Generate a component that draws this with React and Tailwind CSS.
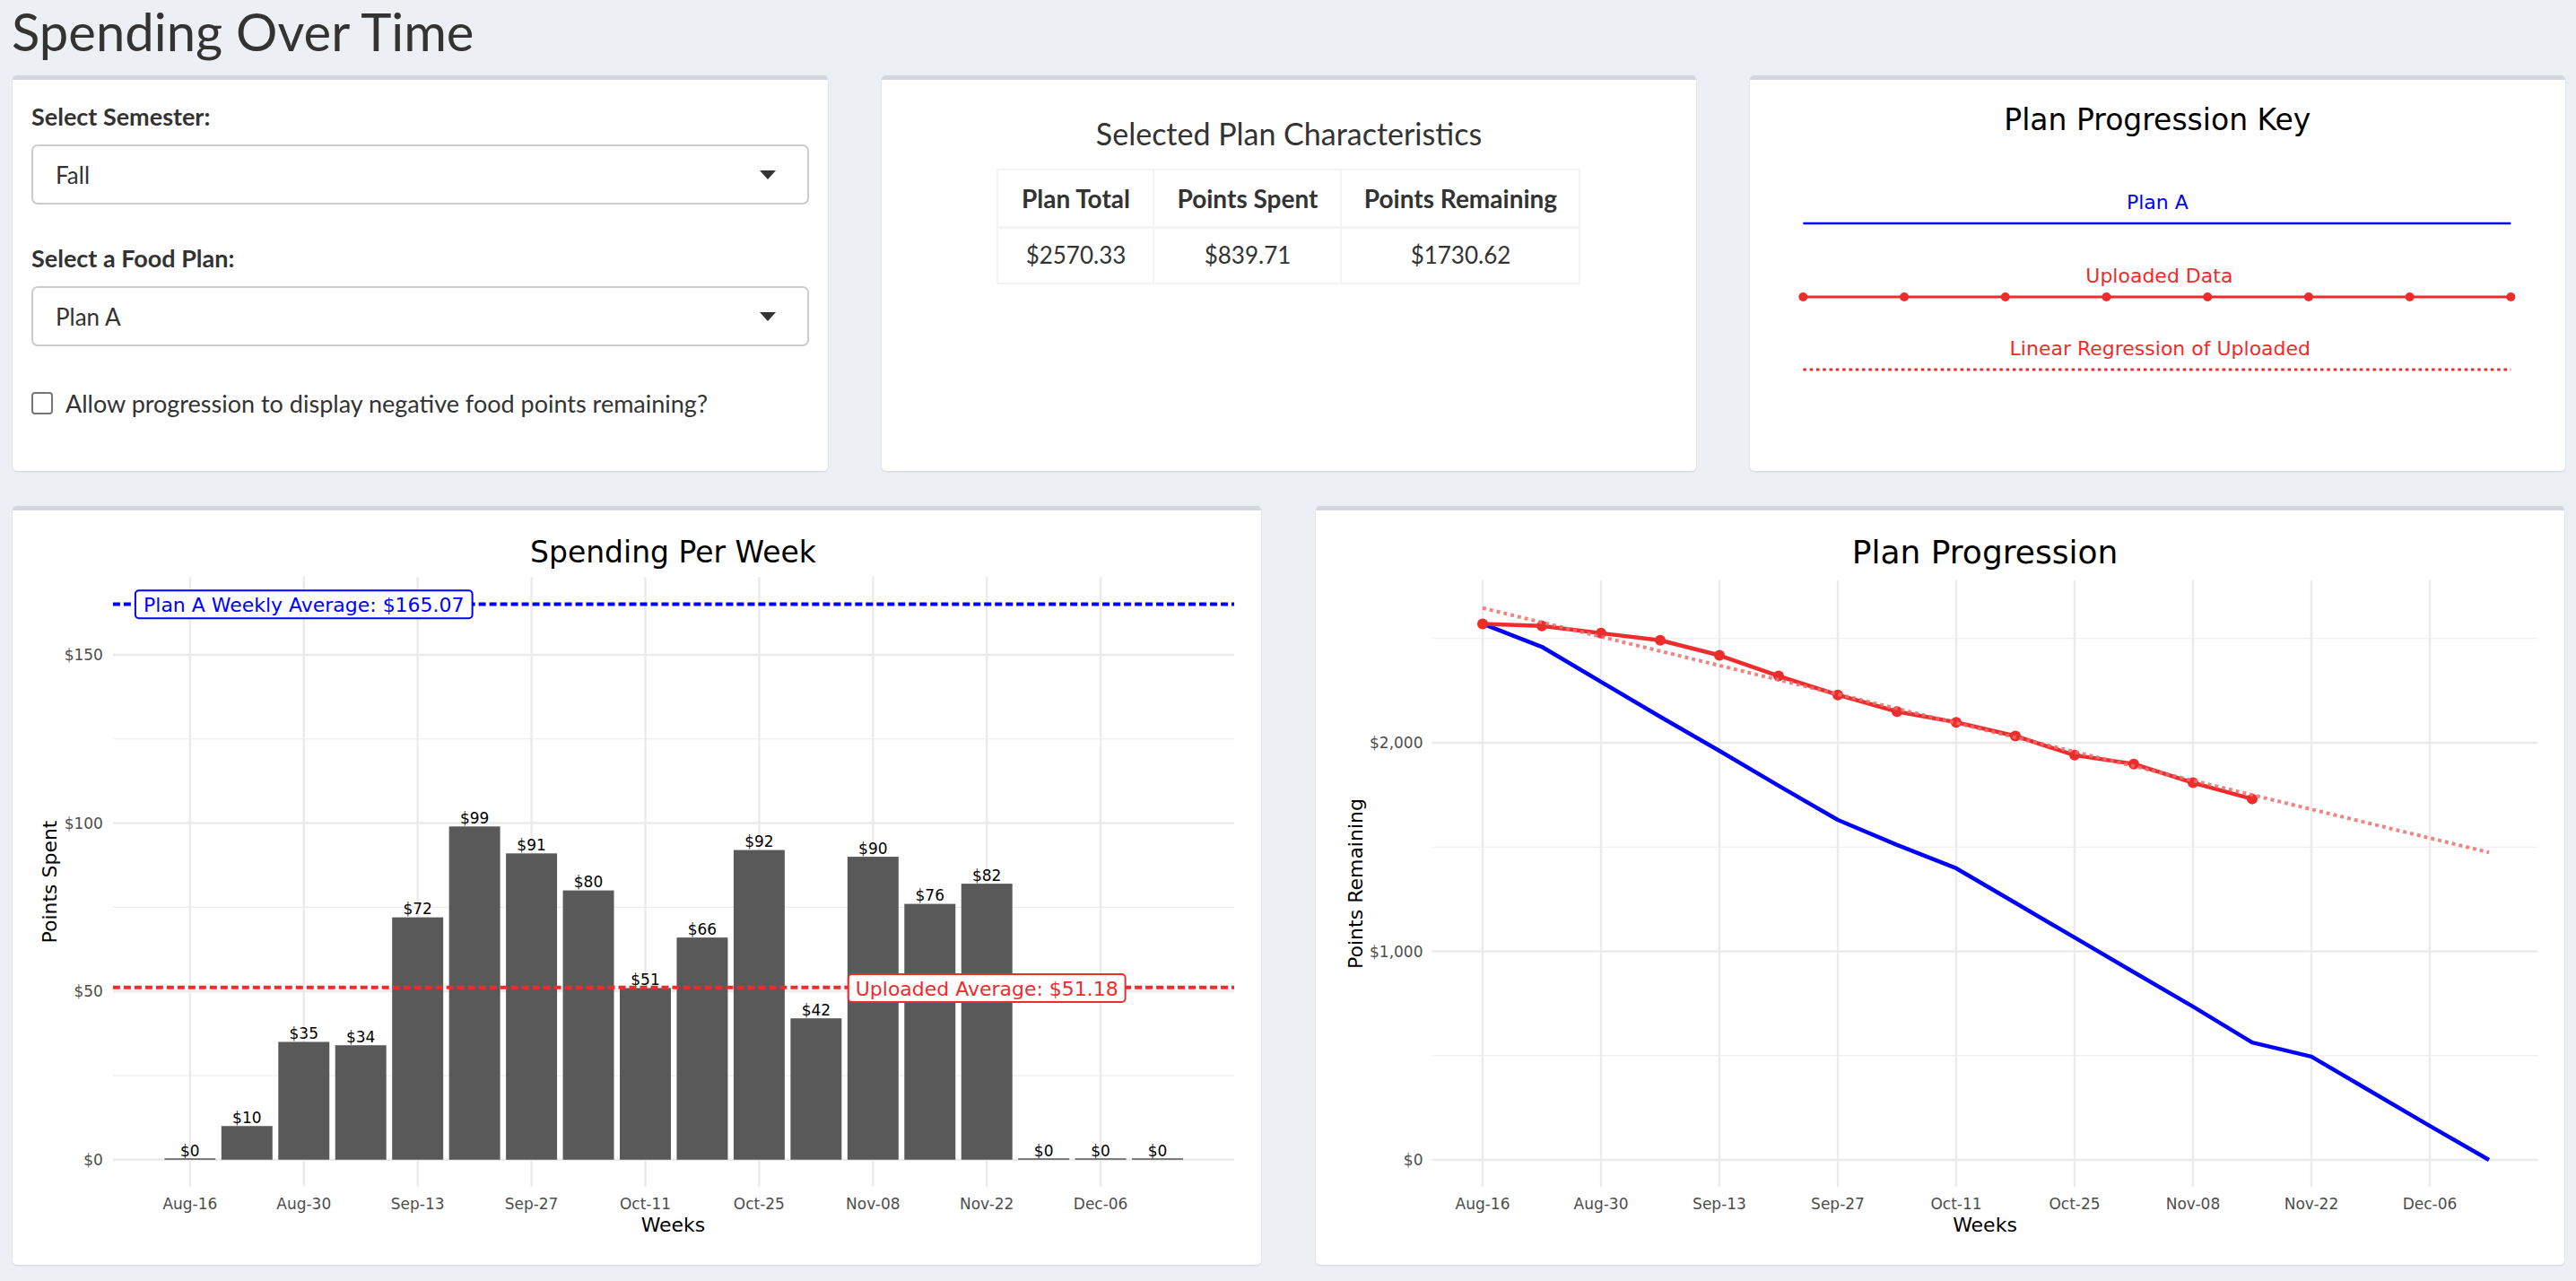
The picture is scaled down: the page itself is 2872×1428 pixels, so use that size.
import React from 'react';

// plot colours (ggplot output)
const RED = '#ee2c2c';
const BLUE = '#0000ff';
const GRID = '#ebebeb';
const AXIS = '#4d4d4d';
const PLOT_FONT = 'DejaVu Sans, sans-serif';

const weekly = [0, 10, 35, 34, 72, 99, 91, 80, 51, 66, 92, 42, 90, 76, 82, 0, 0, 0];
const ticks = ['Aug-16', 'Aug-30', 'Sep-13', 'Sep-27', 'Oct-11', 'Oct-25', 'Nov-08', 'Nov-22', 'Dec-06'];
const planA = [2570.33, 2460, 2292, 2125, 1961, 1794, 1630, 1510, 1398, 1232, 1066, 900, 735, 563, 495, 329, 163, 0];

// cumulative uploaded data, 14 weeks
const uploaded = weekly.slice(0, 14).reduce((acc, w, i) => {
    const prev = i === 0 ? 2570.33 : acc[i - 1];
    acc.push(prev - w);
    return acc;
}, []);
uploaded[13] = 1730.62;

// linear regression of uploaded
const n = uploaded.length;
const meanX = (n - 1) / 2;
const meanY = uploaded.reduce((a, b) => a + b, 0) / n;
let sxy = 0, sxx = 0;
uploaded.forEach((v, i) => { sxy += (i - meanX) * (v - meanY); sxx += (i - meanX) ** 2; });
const slope = sxy / sxx;
const intercept = meanY - slope * meanX;

function Card({ className = '', children }) {
    return (
        <div className={`bg-white rounded-[5px] border-t-[5px] border-[#d2d6de] shadow-[0_1px_2px_rgba(0,0,0,0.12)] overflow-hidden ${className}`}>
            {children}
        </div>
    );
}

function Select({ value, className = '' }) {
    return (
        <div className={`h-[67px] border-2 border-[#cccccc] rounded-[7px] flex items-center justify-between pl-[25px] pr-[35px] ${className}`}>
            <span className="text-[26px] leading-[26px] text-[#333]">{value}</span>
            <span className="w-0 h-0 border-l-[9px] border-r-[9px] border-t-[10px] border-l-transparent border-r-transparent border-t-[#333]" />
        </div>
    );
}

function SpendingChart() {
    const yv = v => 724 - 3.755 * v;
    const bx = i => 198 + 63.5 * i;
    return (
        <svg viewBox="0 0 1393 841" className="block w-full h-[841px]" fontFamily={PLOT_FONT}>
            <text x={737} y={58} fontSize={33} textAnchor="middle" fill="#000">Spending Per Week</text>

            {/* grid */}
            {[25, 75, 125].map(v => (
                <line key={v} x1={112} x2={1363} y1={yv(v)} y2={yv(v)} stroke={GRID} strokeWidth={1.2} />
            ))}
            {[0, 50, 100, 150].map(v => (
                <line key={v} x1={112} x2={1363} y1={yv(v)} y2={yv(v)} stroke={GRID} strokeWidth={2.4} />
            ))}
            {ticks.map((t, k) => (
                <line key={t} x1={bx(2 * k)} x2={bx(2 * k)} y1={74} y2={754} stroke={GRID} strokeWidth={2.4} />
            ))}

            {/* bars */}
            {weekly.map((v, i) => (
                <rect key={i} x={bx(i) - 28.5} width={57} y={yv(v) - (v === 0 ? 1.5 : 0)} height={v === 0 ? 1.5 : 3.755 * v} fill="#595959" />
            ))}
            {weekly.map((v, i) => (
                <text key={i} x={bx(i)} y={yv(v) - 3.5} fontSize={17} textAnchor="middle" fill="#000">${v}</text>
            ))}

            {/* averages */}
            <line x1={112} x2={1363} y1={yv(165.07)} y2={yv(165.07)} stroke={BLUE} strokeWidth={4} strokeDasharray="8 4" />
            <line x1={112} x2={1363} y1={yv(51.18)} y2={yv(51.18)} stroke={RED} strokeWidth={4} strokeDasharray="8 4" />

            <rect x={137} y={89} width={376} height={31} rx={4} fill="#fff" stroke={BLUE} strokeWidth={2} />
            <text x={325} y={113} fontSize={22} textAnchor="middle" fill={BLUE}>Plan A Weekly Average: $165.07</text>
            <rect x={932.5} y={517} width={309} height={31} rx={4} fill="#fff" stroke={RED} strokeWidth={2} />
            <text x={1087} y={541} fontSize={22} textAnchor="middle" fill={RED}>Uploaded Average: $51.18</text>

            {/* axes */}
            {[0, 50, 100, 150].map(v => (
                <text key={v} x={101} y={yv(v) + 6} fontSize={17} textAnchor="end" fill={AXIS}>${v}</text>
            ))}
            {ticks.map((t, k) => (
                <text key={t} x={bx(2 * k)} y={779} fontSize={17} textAnchor="middle" fill={AXIS}>{t}</text>
            ))}
            <text x={737} y={804} fontSize={22} textAnchor="middle" fill="#000">Weeks</text>
            <text transform="translate(49 414) rotate(-90)" fontSize={22} textAnchor="middle" fill="#000">Points Spent</text>
        </svg>
    );
}

function ProgressionChart() {
    const yv = v => 724 - 0.2325 * v;
    const wx = i => 185.5 + 66 * i;
    const pts = arr => arr.map((v, i) => `${wx(i)},${yv(v)}`).join(' ');
    return (
        <svg viewBox="0 0 1391 841" className="block w-full h-[841px]" fontFamily={PLOT_FONT}>
            <text x={745.5} y={59} fontSize={36} textAnchor="middle" fill="#000">Plan Progression</text>

            {[500, 1500, 2500].map(v => (
                <line key={v} x1={129} x2={1362} y1={yv(v)} y2={yv(v)} stroke={GRID} strokeWidth={1.2} />
            ))}
            {[0, 1000, 2000].map(v => (
                <line key={v} x1={129} x2={1362} y1={yv(v)} y2={yv(v)} stroke={GRID} strokeWidth={2.4} />
            ))}
            {ticks.map((t, k) => (
                <line key={t} x1={wx(2 * k)} x2={wx(2 * k)} y1={78} y2={754} stroke={GRID} strokeWidth={2.4} />
            ))}

            <polyline points={pts(planA)} fill="none" stroke={BLUE} strokeWidth={4.5} strokeLinejoin="round" />
            <polyline points={pts(uploaded)} fill="none" stroke={RED} strokeWidth={4.5} strokeLinejoin="round" />
            {uploaded.map((v, i) => (
                <circle key={i} cx={wx(i)} cy={yv(v)} r={6} fill={RED} />
            ))}
            <line x1={wx(0)} y1={yv(intercept)} x2={wx(17)} y2={yv(intercept + slope * 17)} stroke="#ea7070" strokeOpacity={0.85} strokeWidth={4} strokeDasharray="4 4" />

            {[0, 1000, 2000].map(v => (
                <text key={v} x={119} y={yv(v) + 6} fontSize={17} textAnchor="end" fill={AXIS}>
                    {v === 0 ? '$0' : `$${v.toLocaleString('en-US')}`}
                </text>
            ))}
            {ticks.map((t, k) => (
                <text key={t} x={wx(2 * k)} y={779} fontSize={17} textAnchor="middle" fill={AXIS}>{t}</text>
            ))}
            <text x={745.5} y={804} fontSize={22} textAnchor="middle" fill="#000">Weeks</text>
            <text transform="translate(51 416) rotate(-90)" fontSize={22} textAnchor="middle" fill="#000">Points Remaining</text>
        </svg>
    );
}

function ProgressionKey() {
    const dots = Array.from({ length: 8 }, (_, i) => 59 + (i * 789) / 7);
    return (
        <svg viewBox="0 0 908 436" className="block w-full h-[436px]" fontFamily={PLOT_FONT}>
            <text x={454} y={56} fontSize={33} textAnchor="middle" fill="#000">Plan Progression Key</text>

            <text x={454} y={144} fontSize={22} textAnchor="middle" fill={BLUE}>Plan A</text>
            <line x1={59} x2={848} y1={160} y2={160} stroke={BLUE} strokeWidth={2.6} />

            <text x={456} y={226} fontSize={22} textAnchor="middle" fill={RED}>Uploaded Data</text>
            <line x1={59} x2={848} y1={242} y2={242} stroke={RED} strokeWidth={2.8} />
            {dots.map(x => <circle key={x} cx={x} cy={242} r={5} fill={RED} />)}

            <text x={457} y={307} fontSize={22} textAnchor="middle" fill={RED}>Linear Regression of Uploaded</text>
            <line x1={59} x2={848} y1={323} y2={323} stroke={RED} strokeWidth={3} strokeDasharray="3.5 3.8" />
        </svg>
    );
}

export default function App() {
    return (
        <div className="min-h-screen bg-[#ecf0f5] font-['Lato',sans-serif] text-[#333]">
            <h1 className="h-[84px] pl-[13px] text-[58px] leading-[70px] font-normal text-[#333]">Spending Over Time</h1>

            {/* top row: inputs, characteristics, key */}
            <div className="grid grid-cols-3 gap-[60px] pl-[14px] pr-[12px]">
                <Card className="h-[441px]">
                    <div className="px-[21px] pt-[27px]">
                        <div className="text-[27px] leading-[27px] font-bold">Select Semester:</div>
                        <Select value="Fall" className="mt-[18px]" />
                        <div className="mt-[46px] text-[27px] leading-[27px] font-bold">Select a Food Plan:</div>
                        <Select value="Plan A" className="mt-[18px]" />
                        <div className="mt-[50px] flex items-center gap-[14px]">
                            <span className="w-[24px] h-[25px] border-2 border-[#767676] rounded-[4px] shrink-0" />
                            <span className="text-[27px] leading-[27px]">Allow progression to display negative food points remaining?</span>
                        </div>
                    </div>
                </Card>

                <Card className="h-[441px]">
                    <div className="flex flex-col items-center pt-[43px]">
                        <h3 className="text-[34px] leading-[34px] font-normal">Selected Plan Characteristics</h3>
                        <table className="mt-[22px] border-collapse table-fixed text-[26px] text-center">
                            <thead>
                                <tr className="h-[64px] text-[28px]">
                                    <th className="w-[174px] border-2 border-b-[3px] border-[#f4f4f4] font-bold">Plan Total</th>
                                    <th className="w-[209px] border-2 border-b-[3px] border-[#f4f4f4] font-bold">Points Spent</th>
                                    <th className="w-[266px] border-2 border-b-[3px] border-[#f4f4f4] font-bold">Points Remaining</th>
                                </tr>
                            </thead>
                            <tbody>
                                <tr className="h-[63px]">
                                    <td className="border-2 border-[#f4f4f4]">$2570.33</td>
                                    <td className="border-2 border-[#f4f4f4]">$839.71</td>
                                    <td className="border-2 border-[#f4f4f4]">$1730.62</td>
                                </tr>
                            </tbody>
                        </table>
                    </div>
                </Card>

                <Card className="h-[441px]">
                    <ProgressionKey />
                </Card>
            </div>

            {/* charts */}
            <div className="grid grid-cols-2 gap-[61px] pl-[14px] pr-[13px] mt-[39px] pb-[18px]">
                <Card className="h-[846px]">
                    <SpendingChart />
                </Card>
                <Card className="h-[846px]">
                    <ProgressionChart />
                </Card>
            </div>
        </div>
    );
}
